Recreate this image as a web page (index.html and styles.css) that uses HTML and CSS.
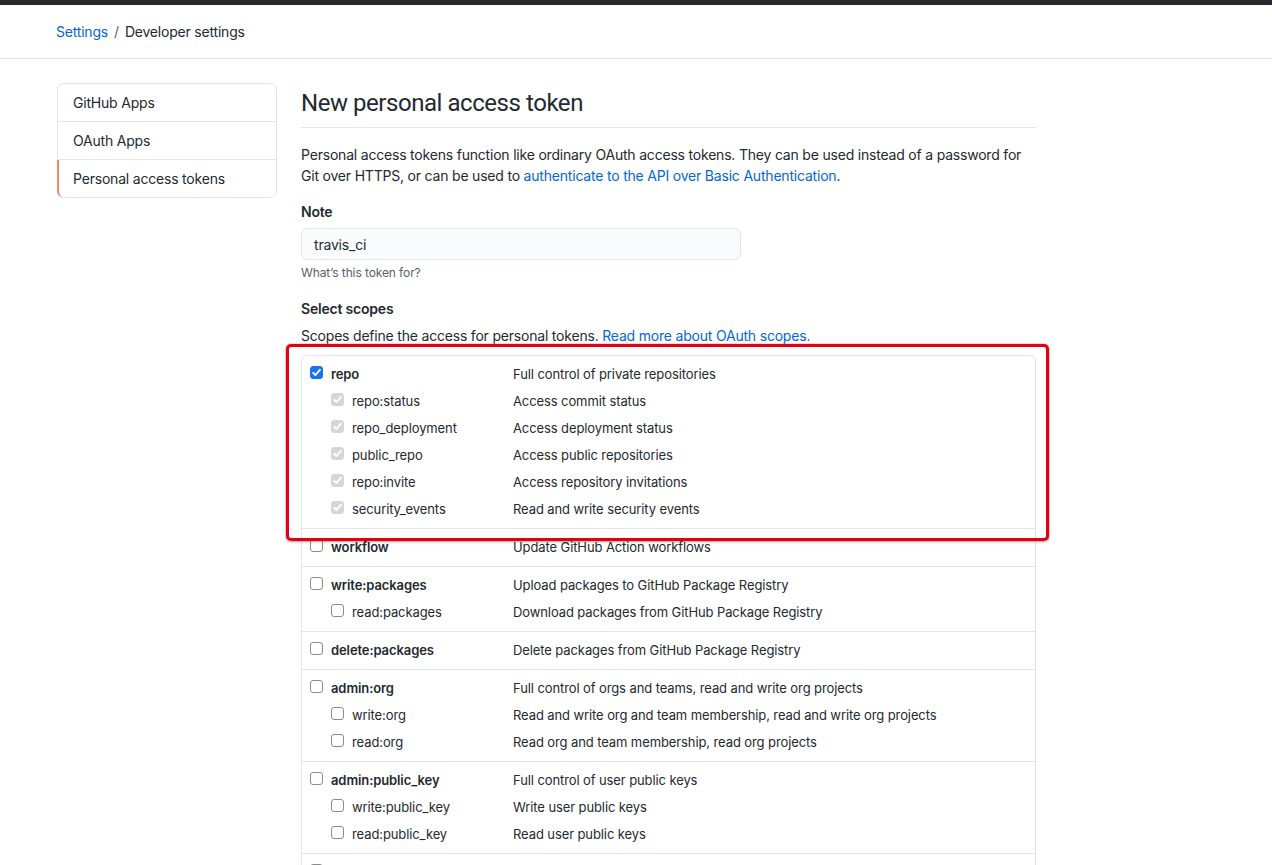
FILE: index.html
```html
<!DOCTYPE html>
<html>
<head>
<meta charset="utf-8">
<link rel="stylesheet" href="styles.css">
</head>
<body>
<div class="topbar"></div>
<div class="crumbs">
  <div class="wrap"><a class="link" href="#">Settings</a><span class="sep">/</span><span>Developer settings</span></div>
</div>
<div class="wrap layout">
  <nav class="menu">
    <a class="menu-item" href="#">GitHub Apps</a>
    <a class="menu-item" href="#">OAuth Apps</a>
    <a class="menu-item selected" href="#">Personal access tokens</a>
  </nav>
  <main class="main">
    <h2 class="subhead">New personal access token</h2>
    <p class="intro">Personal access tokens function like ordinary OAuth access tokens. They can be used instead of a password for Git over HTTPS, or can be used to <a class="link" href="#">authenticate to the API over Basic Authentication</a>.</p>
    <div class="form-group">
      <div class="label">Note</div>
      <div class="input">travis_ci</div>
      <div class="note">What’s this token for?</div>
    </div>
    <div class="form-group">
      <div class="label">Select scopes</div>
      <p class="scopes-desc">Scopes define the access for personal tokens. <a class="link" href="#">Read more about OAuth scopes.</a></p>
      <div class="scopes-wrap">
        <div class="scopes">
          <div class="group">
            <div class="row top"><span class="cb checked"><svg viewBox="0 0 13 13" width="13" height="13"><path d="M3.2 6.8 5.4 9 9.9 3.8" fill="none" stroke="#fff" stroke-width="1.9" stroke-linecap="round" stroke-linejoin="round"/></svg></span><span class="name">repo</span><span class="desc">Full control of private repositories</span></div>
            <div class="row sub"><span class="cb disabled"><svg viewBox="0 0 13 13" width="13" height="13"><path d="M3.2 6.8 5.4 9 9.9 3.8" fill="none" stroke="#fff" stroke-width="1.9" stroke-linecap="round" stroke-linejoin="round"/></svg></span><span class="name">repo:status</span><span class="desc">Access commit status</span></div>
            <div class="row sub"><span class="cb disabled"><svg viewBox="0 0 13 13" width="13" height="13"><path d="M3.2 6.8 5.4 9 9.9 3.8" fill="none" stroke="#fff" stroke-width="1.9" stroke-linecap="round" stroke-linejoin="round"/></svg></span><span class="name">repo_deployment</span><span class="desc">Access deployment status</span></div>
            <div class="row sub"><span class="cb disabled"><svg viewBox="0 0 13 13" width="13" height="13"><path d="M3.2 6.8 5.4 9 9.9 3.8" fill="none" stroke="#fff" stroke-width="1.9" stroke-linecap="round" stroke-linejoin="round"/></svg></span><span class="name">public_repo</span><span class="desc">Access public repositories</span></div>
            <div class="row sub"><span class="cb disabled"><svg viewBox="0 0 13 13" width="13" height="13"><path d="M3.2 6.8 5.4 9 9.9 3.8" fill="none" stroke="#fff" stroke-width="1.9" stroke-linecap="round" stroke-linejoin="round"/></svg></span><span class="name">repo:invite</span><span class="desc">Access repository invitations</span></div>
            <div class="row sub"><span class="cb disabled"><svg viewBox="0 0 13 13" width="13" height="13"><path d="M3.2 6.8 5.4 9 9.9 3.8" fill="none" stroke="#fff" stroke-width="1.9" stroke-linecap="round" stroke-linejoin="round"/></svg></span><span class="name">security_events</span><span class="desc">Read and write security events</span></div>
          </div>
          <div class="group">
            <div class="row top"><span class="cb"></span><span class="name">workflow</span><span class="desc">Update GitHub Action workflows</span></div>
          </div>
          <div class="group">
            <div class="row top"><span class="cb"></span><span class="name">write:packages</span><span class="desc">Upload packages to GitHub Package Registry</span></div>
            <div class="row sub"><span class="cb"></span><span class="name">read:packages</span><span class="desc">Download packages from GitHub Package Registry</span></div>
          </div>
          <div class="group">
            <div class="row top"><span class="cb"></span><span class="name">delete:packages</span><span class="desc">Delete packages from GitHub Package Registry</span></div>
          </div>
          <div class="group">
            <div class="row top"><span class="cb"></span><span class="name">admin:org</span><span class="desc">Full control of orgs and teams, read and write org projects</span></div>
            <div class="row sub"><span class="cb"></span><span class="name">write:org</span><span class="desc">Read and write org and team membership, read and write org projects</span></div>
            <div class="row sub"><span class="cb"></span><span class="name">read:org</span><span class="desc">Read org and team membership, read org projects</span></div>
          </div>
          <div class="group">
            <div class="row top"><span class="cb"></span><span class="name">admin:public_key</span><span class="desc">Full control of user public keys</span></div>
            <div class="row sub"><span class="cb"></span><span class="name">write:public_key</span><span class="desc">Write user public keys</span></div>
            <div class="row sub"><span class="cb"></span><span class="name">read:public_key</span><span class="desc">Read user public keys</span></div>
          </div>
          <div class="group">
            <div class="row top"><span class="cb"></span><span class="name">admin:repo_hook</span><span class="desc">Full control of repository hooks</span></div>
            <div class="row sub"><span class="cb"></span><span class="name">write:repo_hook</span><span class="desc">Write repository hooks</span></div>
            <div class="row sub"><span class="cb"></span><span class="name">read:repo_hook</span><span class="desc">Read repository hooks</span></div>
          </div>
        </div>
        <div class="highlight"></div>
      </div>
    </div>
  </main>
</div>
</body>
</html>
```
FILE: styles.css
```css
* { box-sizing: border-box; }
html, body { margin: 0; padding: 0; background: #fff; }
body {
  font-family: Inter, "Liberation Sans", sans-serif;
  font-size: 14px;
  line-height: 21px;
  letter-spacing: -0.2px;
  color: #24292e;
  overflow: hidden;
  height: 865px;
}
a { text-decoration: none; }
.link { color: #0366d6; }
.topbar { height: 5px; background: #24292e; }
.wrap { margin-left: 56px; width: 980px; }
.crumbs {
  padding: 16px 0;
  border-bottom: 1px solid #e1e4e8;
}
.sep { color: #586069; margin: 0 6px; }
.layout { display: flex; gap: 24px; margin-top: 24px; }
.menu {
  width: 220px;
  flex: none;
  align-self: flex-start;
  border: 1px solid #e1e4e8;
  border-radius: 6px;
  display: flex;
  flex-direction: column;
  margin-left: 1px;
}
.menu-item {
  color: #24292e;
  padding: 8px 16px 8px 15px;
  border-bottom: 1px solid #e1e4e8;
}
.menu-item:last-child { border-bottom: 0; }
.menu-item.selected {
  border-left: 2px solid #f9826c;
  padding-left: 14px;
  margin-left: -1px;
  border-bottom-left-radius: 6px;
}
.main { flex: 1; min-width: 0; width: 735px; }
.subhead {
  margin: 5px 0 0;
  font-family: Roboto, Inter, sans-serif;
  font-size: 24px;
  line-height: 30px;
  letter-spacing: -0.45px;
  font-weight: 400;
  padding-bottom: 9px;
  border-bottom: 1px solid #e1e4e8;
}
.intro { margin: 16px 0 0; }
.form-group { margin-top: 15px; }
.label { font-weight: 600; margin-bottom: 6px; }
.input {
  width: 440px;
  height: 32px;
  padding: 5px 12px;
  background: #fafbfc;
  border: 1px solid #e1e4e8;
  border-radius: 6px;
}
.note { font-size: 12px; line-height: 18px; color: #586069; margin-top: 4px; letter-spacing: -0.1px; }
.form-group + .form-group { margin-top: 16px; }
.scopes-desc { margin: 0 0 9px; }
.scopes-wrap { position: relative; }
.scopes {
  border: 1px solid #e1e4e8;
  border-radius: 6px;
}
.group { padding: 5px 8px; border-top: 1px solid #e1e4e8; }
.group:first-child { border-top: 0; }
.row {
  display: grid;
  grid-template-columns: 13px 174px 1fr;
  column-gap: 8px;
  align-items: center;
  height: 27px;
  font-size: 13px;
  letter-spacing: -0.1px;
}
.row.sub { grid-template-columns: 13px 153px 1fr; padding-left: 21px; }
.row.top .name { font-weight: 600; }
.desc { color: #24292e; }
.cb {
  width: 13px;
  height: 13px;
  border: 1px solid #8c8c8c;
  border-radius: 3px;
  background: #fff;
  display: block;
  position: relative;
  top: -2px;
}
.cb svg { display: block; margin: -1px; }
.cb.checked { background: #1a73e8; border-color: #1a73e8; }
.cb.disabled { background: #d6d6d6; border-color: #d6d6d6; }
.highlight {
  position: absolute;
  left: -15px;
  top: -11px;
  width: 763px;
  height: 197px;
  border: 3px solid #e3000f;
  border-radius: 5px;
  box-shadow: 0 0 1px #b00000, 0 1px 3px rgba(0,0,0,0.3);
  pointer-events: none;
}
```
